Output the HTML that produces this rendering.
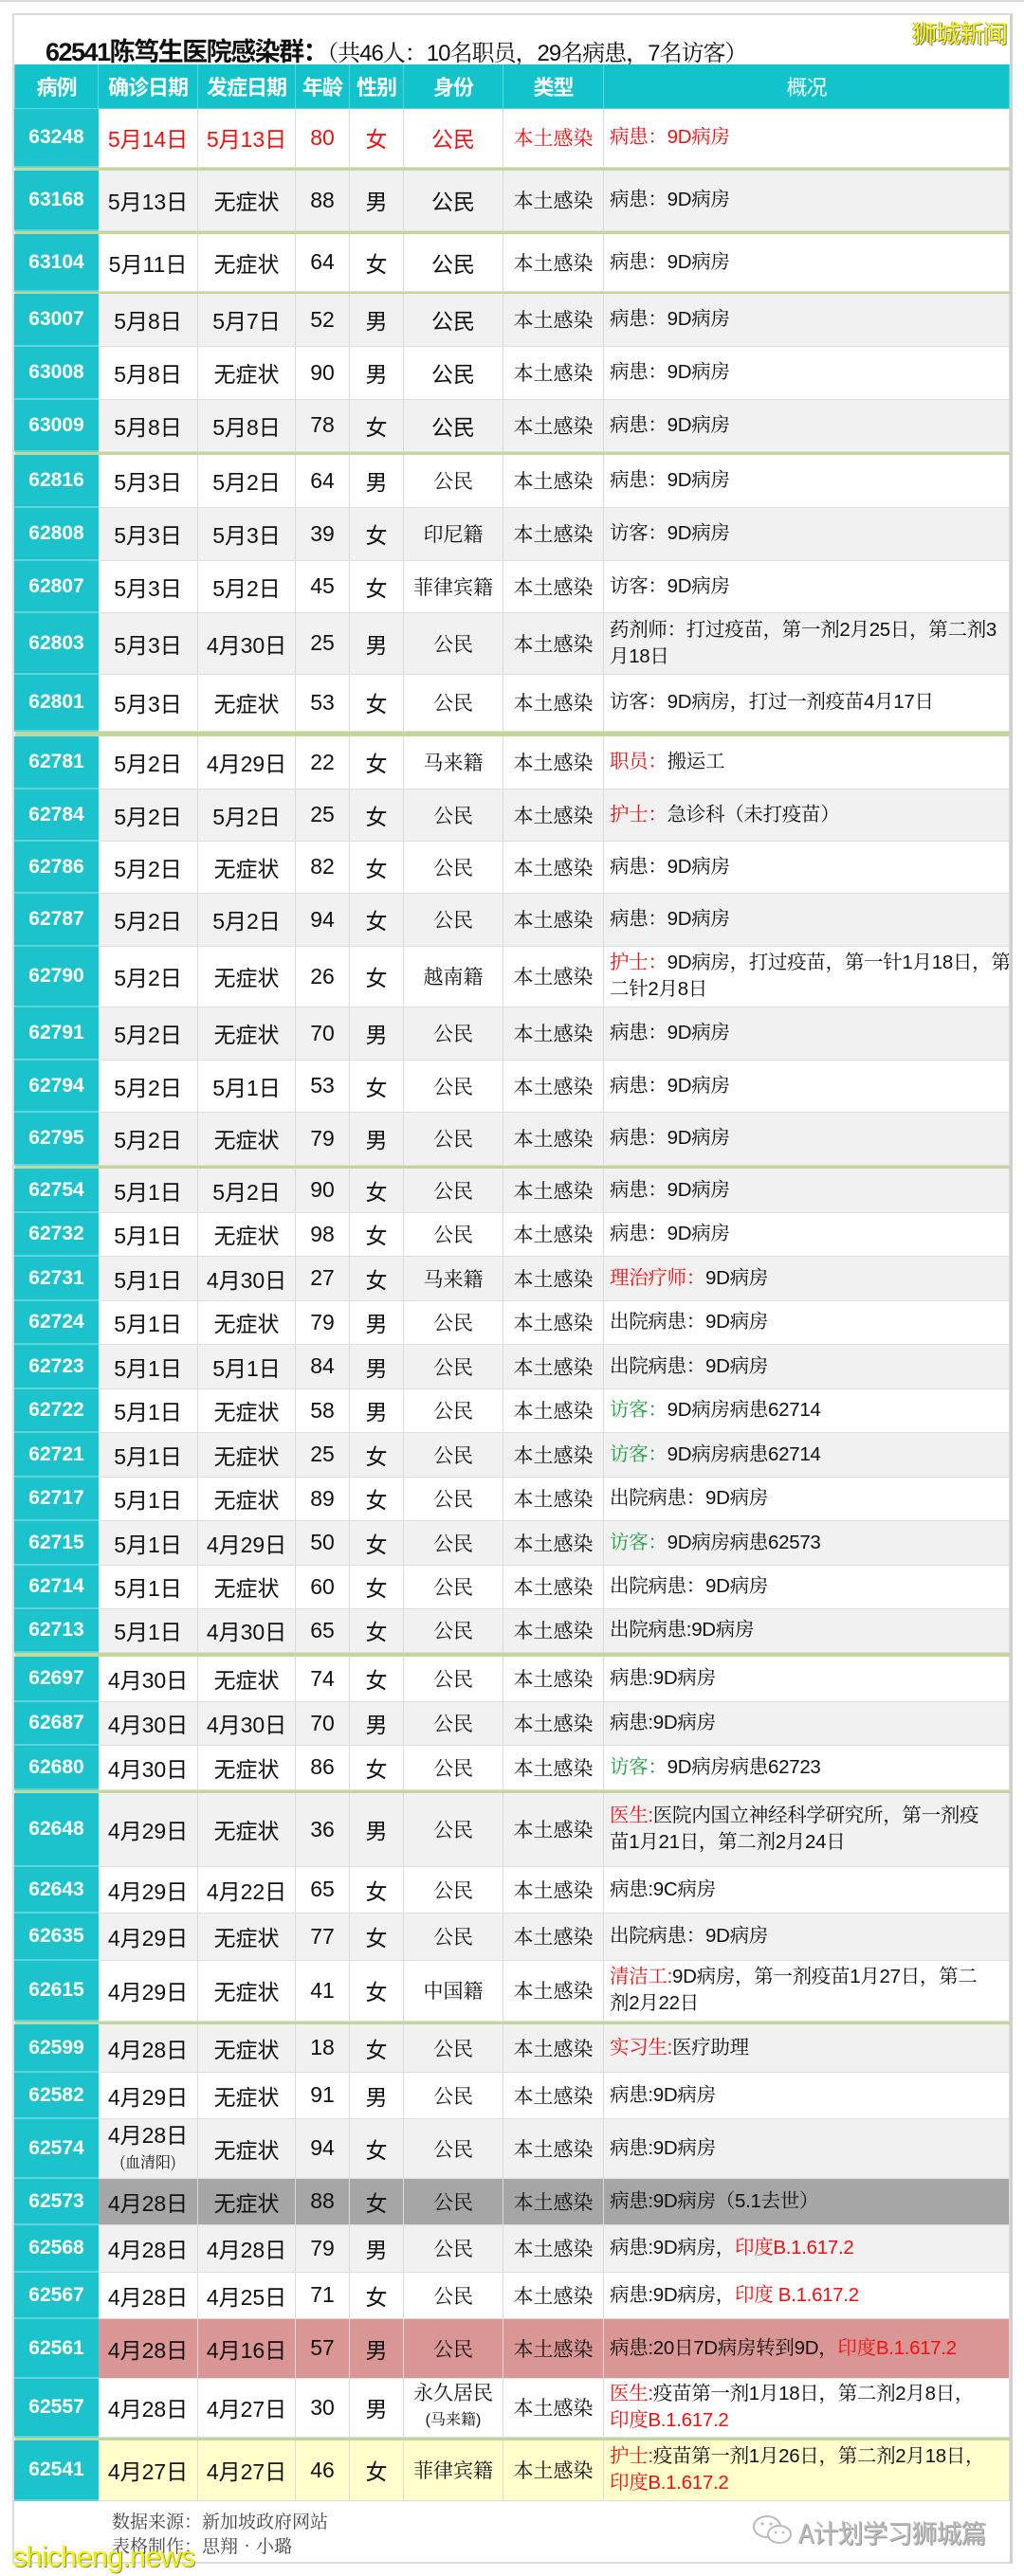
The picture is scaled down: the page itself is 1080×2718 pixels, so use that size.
<!DOCTYPE html>
<html><head><meta charset="utf-8">
<style>
*{margin:0;padding:0;box-sizing:border-box}
body{width:1080px;height:2718px;background:#fff;position:relative;overflow:hidden;font-family:"Liberation Sans","Noto Sans CJK SC",sans-serif}
.topline{position:absolute;left:0;top:0;width:1080px;height:2px;background:#ddd}
.frame{position:absolute;left:13px;top:14px;width:1055px;height:2691px;border:2px solid #dcdcdc;border-right:3px solid #d0d0d0;background:#fff}
.title{position:absolute;left:48px;top:33px;font-size:27px;font-weight:bold;color:#111;white-space:nowrap;letter-spacing:-1.5px}
.title span{font-weight:normal;font-family:"Liberation Sans","Noto Serif CJK SC",serif;font-size:24px;letter-spacing:-1px}
.wm{position:absolute;left:962px;top:16px;font-size:26px;color:#ffff00;text-shadow:1px 1px 0 #777,-1px 0 0 #999;letter-spacing:-1px;font-family:"Noto Sans CJK SC",sans-serif}
table{position:absolute;left:15px;top:68px;border-collapse:collapse;table-layout:fixed;width:1049px}
td{border-left:1px solid #dadada;border-right:1px solid #dadada;border-bottom:1px solid #dedede;text-align:center;vertical-align:middle;padding:0;font-size:23px;color:#111;white-space:nowrap;overflow:hidden}
tr.h td{background:#12c3cc;color:#fff;font-weight:bold;font-size:22px;border-color:#5fd6dc;letter-spacing:-1px}
td.id{background:#1cc3cc;color:#fff;font-weight:bold;font-size:21px;border-color:#1cc3cc;border-bottom:2px solid #5ed3d9}
td.s{font-family:"Liberation Sans","Noto Serif CJK SC",serif;font-size:21px}
td.n{text-align:left;padding-left:6px;font-family:"Liberation Sans","Noto Serif CJK SC",serif;font-size:20.5px;line-height:28px;letter-spacing:-0.3px}
tr.sep td{background:#c4d79b;border:none;padding:0}
tr.g td{background:#f1f1f1}
tr.w td{background:#fff}
tr.dk td{background:#a6a6a6}
tr.pk td{background:#da9694}
tr.yl td{background:#ffffcc}
tr td.id{background:#1cc3cc}
.r{color:#f01010}
.gr{color:#20a040}
tr.red td{color:#f01010}
tr.red td.id{color:#fff}
small{font-size:16px}
.foot{position:absolute;left:118px;font-family:"Noto Serif CJK SC",serif;font-size:19px;color:#444;white-space:nowrap}
.sc{position:absolute;left:13px;top:2680px;font-size:31px;color:#f2f200;text-shadow:1px 1px 0 #888;letter-spacing:-1px}
.wx{position:absolute;left:842px;top:2652px;font-size:27px;color:#bbb;font-family:"Noto Sans CJK SC",sans-serif;letter-spacing:-1px;text-shadow:1px 1px 0 #999}
</style></head><body>
<div class="topline"></div>
<div class="frame"></div>
<div class="title">62541陈笃生医院感染群：<span>（共46人：10名职员，29名病患，7名访客）</span></div>
<div class="wm">狮城新闻</div>
<table>
<colgroup><col style="width:88px"><col style="width:105px"><col style="width:103px"><col style="width:57px"><col style="width:57px"><col style="width:105px"><col style="width:106px"><col style="width:428px"></colgroup>
<tr class="h" style="height:46px"><td>病例</td><td>确诊日期</td><td>发症日期</td><td>年龄</td><td>性别</td><td>身份</td><td>类型</td><td style="font-weight:normal">概况</td></tr>
<tr class="w red" style="height:62px"><td class="id">63248</td><td>5月14日</td><td>5月13日</td><td>80</td><td>女</td><td>公民</td><td class="s">本土感染</td><td class="n">病患：9D病房</td></tr>
<tr class="sep" style="height:4px"><td colspan="8"></td></tr>
<tr class="g" style="height:63px"><td class="id">63168</td><td>5月13日</td><td>无症状</td><td>88</td><td>男</td><td>公民</td><td class="s">本土感染</td><td class="n">病患：9D病房</td></tr>
<tr class="sep" style="height:4px"><td colspan="8"></td></tr>
<tr class="w" style="height:60px"><td class="id">63104</td><td>5月11日</td><td>无症状</td><td>64</td><td>女</td><td>公民</td><td class="s">本土感染</td><td class="n">病患：9D病房</td></tr>
<tr class="sep" style="height:3px"><td colspan="8"></td></tr>
<tr class="g" style="height:55px"><td class="id">63007</td><td>5月8日</td><td>5月7日</td><td>52</td><td>男</td><td>公民</td><td class="s">本土感染</td><td class="n">病患：9D病房</td></tr>
<tr class="w" style="height:56px"><td class="id">63008</td><td>5月8日</td><td>无症状</td><td>90</td><td>男</td><td>公民</td><td class="s">本土感染</td><td class="n">病患：9D病房</td></tr>
<tr class="g" style="height:55px"><td class="id">63009</td><td>5月8日</td><td>5月8日</td><td>78</td><td>女</td><td>公民</td><td class="s">本土感染</td><td class="n">病患：9D病房</td></tr>
<tr class="sep" style="height:4px"><td colspan="8"></td></tr>
<tr class="w" style="height:55px"><td class="id">62816</td><td>5月3日</td><td>5月2日</td><td>64</td><td>男</td><td class="s">公民</td><td class="s">本土感染</td><td class="n">病患：9D病房</td></tr>
<tr class="g" style="height:56px"><td class="id">62808</td><td>5月3日</td><td>5月3日</td><td>39</td><td>女</td><td class="s">印尼籍</td><td class="s">本土感染</td><td class="n">访客：9D病房</td></tr>
<tr class="w" style="height:55px"><td class="id">62807</td><td>5月3日</td><td>5月2日</td><td>45</td><td>女</td><td class="s">菲律宾籍</td><td class="s">本土感染</td><td class="n">访客：9D病房</td></tr>
<tr class="g" style="height:65px"><td class="id">62803</td><td>5月3日</td><td>4月30日</td><td>25</td><td>男</td><td class="s">公民</td><td class="s">本土感染</td><td class="n">药剂师：打过疫苗，第一剂2月25日，第二剂3<br>月18日</td></tr>
<tr class="w" style="height:60px"><td class="id">62801</td><td>5月3日</td><td>无症状</td><td>53</td><td>女</td><td class="s">公民</td><td class="s">本土感染</td><td class="n">访客：9D病房，打过一剂疫苗4月17日</td></tr>
<tr class="sep" style="height:6px"><td colspan="8"></td></tr>
<tr class="w" style="height:55px"><td class="id">62781</td><td>5月2日</td><td>4月29日</td><td>22</td><td>女</td><td class="s">马来籍</td><td class="s">本土感染</td><td class="n"><span class="r">职员：</span>搬运工</td></tr>
<tr class="g" style="height:55px"><td class="id">62784</td><td>5月2日</td><td>5月2日</td><td>25</td><td>女</td><td class="s">公民</td><td class="s">本土感染</td><td class="n"><span class="r">护士：</span>急诊科（未打疫苗）</td></tr>
<tr class="w" style="height:55px"><td class="id">62786</td><td>5月2日</td><td>无症状</td><td>82</td><td>女</td><td class="s">公民</td><td class="s">本土感染</td><td class="n">病患：9D病房</td></tr>
<tr class="g" style="height:56px"><td class="id">62787</td><td>5月2日</td><td>5月2日</td><td>94</td><td>女</td><td class="s">公民</td><td class="s">本土感染</td><td class="n">病患：9D病房</td></tr>
<tr class="w" style="height:64px"><td class="id">62790</td><td>5月2日</td><td>无症状</td><td>26</td><td>女</td><td class="s">越南籍</td><td class="s">本土感染</td><td class="n"><span class="r">护士：</span>9D病房，打过疫苗，第一针1月18日，第<br>二针2月8日</td></tr>
<tr class="g" style="height:56px"><td class="id">62791</td><td>5月2日</td><td>无症状</td><td>70</td><td>男</td><td class="s">公民</td><td class="s">本土感染</td><td class="n">病患：9D病房</td></tr>
<tr class="w" style="height:55px"><td class="id">62794</td><td>5月2日</td><td>5月1日</td><td>53</td><td>女</td><td class="s">公民</td><td class="s">本土感染</td><td class="n">病患：9D病房</td></tr>
<tr class="g" style="height:56px"><td class="id">62795</td><td>5月2日</td><td>无症状</td><td>79</td><td>男</td><td class="s">公民</td><td class="s">本土感染</td><td class="n">病患：9D病房</td></tr>
<tr class="sep" style="height:4px"><td colspan="8"></td></tr>
<tr class="g" style="height:46px"><td class="id">62754</td><td>5月1日</td><td>5月2日</td><td>90</td><td>女</td><td class="s">公民</td><td class="s">本土感染</td><td class="n">病患：9D病房</td></tr>
<tr class="w" style="height:46px"><td class="id">62732</td><td>5月1日</td><td>无症状</td><td>98</td><td>女</td><td class="s">公民</td><td class="s">本土感染</td><td class="n">病患：9D病房</td></tr>
<tr class="g" style="height:47px"><td class="id">62731</td><td>5月1日</td><td>4月30日</td><td>27</td><td>女</td><td class="s">马来籍</td><td class="s">本土感染</td><td class="n"><span class="r">理治疗师：</span>9D病房</td></tr>
<tr class="w" style="height:46px"><td class="id">62724</td><td>5月1日</td><td>无症状</td><td>79</td><td>男</td><td class="s">公民</td><td class="s">本土感染</td><td class="n">出院病患：9D病房</td></tr>
<tr class="g" style="height:47px"><td class="id">62723</td><td>5月1日</td><td>5月1日</td><td>84</td><td>男</td><td class="s">公民</td><td class="s">本土感染</td><td class="n">出院病患：9D病房</td></tr>
<tr class="w" style="height:46px"><td class="id">62722</td><td>5月1日</td><td>无症状</td><td>58</td><td>男</td><td class="s">公民</td><td class="s">本土感染</td><td class="n"><span class="gr">访客：</span>9D病房病患62714</td></tr>
<tr class="g" style="height:47px"><td class="id">62721</td><td>5月1日</td><td>无症状</td><td>25</td><td>女</td><td class="s">公民</td><td class="s">本土感染</td><td class="n"><span class="gr">访客：</span>9D病房病患62714</td></tr>
<tr class="w" style="height:46px"><td class="id">62717</td><td>5月1日</td><td>无症状</td><td>89</td><td>女</td><td class="s">公民</td><td class="s">本土感染</td><td class="n">出院病患：9D病房</td></tr>
<tr class="g" style="height:47px"><td class="id">62715</td><td>5月1日</td><td>4月29日</td><td>50</td><td>女</td><td class="s">公民</td><td class="s">本土感染</td><td class="n"><span class="gr">访客：</span>9D病房病患62573</td></tr>
<tr class="w" style="height:46px"><td class="id">62714</td><td>5月1日</td><td>无症状</td><td>60</td><td>女</td><td class="s">公民</td><td class="s">本土感染</td><td class="n">出院病患：9D病房</td></tr>
<tr class="g" style="height:46px"><td class="id">62713</td><td>5月1日</td><td>4月30日</td><td>65</td><td>女</td><td class="s">公民</td><td class="s">本土感染</td><td class="n">出院病患:9D病房</td></tr>
<tr class="sep" style="height:5px"><td colspan="8"></td></tr>
<tr class="w" style="height:47px"><td class="id">62697</td><td>4月30日</td><td>无症状</td><td>74</td><td>女</td><td class="s">公民</td><td class="s">本土感染</td><td class="n">病患:9D病房</td></tr>
<tr class="g" style="height:46px"><td class="id">62687</td><td>4月30日</td><td>4月30日</td><td>70</td><td>男</td><td class="s">公民</td><td class="s">本土感染</td><td class="n">病患:9D病房</td></tr>
<tr class="w" style="height:47px"><td class="id">62680</td><td>4月30日</td><td>无症状</td><td>86</td><td>女</td><td class="s">公民</td><td class="s">本土感染</td><td class="n"><span class="gr">访客：</span>9D病房病患62723</td></tr>
<tr class="sep" style="height:4px"><td colspan="8"></td></tr>
<tr class="g" style="height:77px"><td class="id">62648</td><td>4月29日</td><td>无症状</td><td>36</td><td>男</td><td class="s">公民</td><td class="s">本土感染</td><td class="n"><span class="r">医生:</span>医院内国立神经科学研究所，第一剂疫<br>苗1月21日，第二剂2月24日</td></tr>
<tr class="w" style="height:49px"><td class="id">62643</td><td>4月29日</td><td>4月22日</td><td>65</td><td>女</td><td class="s">公民</td><td class="s">本土感染</td><td class="n">病患:9C病房</td></tr>
<tr class="g" style="height:50px"><td class="id">62635</td><td>4月29日</td><td>无症状</td><td>77</td><td>女</td><td class="s">公民</td><td class="s">本土感染</td><td class="n">出院病患：9D病房</td></tr>
<tr class="w" style="height:64px"><td class="id">62615</td><td>4月29日</td><td>无症状</td><td>41</td><td>女</td><td class="s">中国籍</td><td class="s">本土感染</td><td class="n"><span class="r">清洁工:</span>9D病房，第一剂疫苗1月27日，第二<br>剂2月22日</td></tr>
<tr class="sep" style="height:4px"><td colspan="8"></td></tr>
<tr class="g" style="height:50px"><td class="id">62599</td><td>4月28日</td><td>无症状</td><td>18</td><td>女</td><td class="s">公民</td><td class="s">本土感染</td><td class="n"><span class="r">实习生:</span>医疗助理</td></tr>
<tr class="w" style="height:49px"><td class="id">62582</td><td>4月29日</td><td>无症状</td><td>91</td><td>男</td><td class="s">公民</td><td class="s">本土感染</td><td class="n">病患:9D病房</td></tr>
<tr class="g" style="height:63px"><td class="id">62574</td><td style="line-height:26px">4月28日<br><small class="s" style="font-family:'Noto Serif CJK SC',serif">(血清阳)</small></td><td>无症状</td><td>94</td><td>女</td><td class="s">公民</td><td class="s">本土感染</td><td class="n">病患:9D病房</td></tr>
<tr class="dk" style="height:49px"><td class="id">62573</td><td>4月28日</td><td>无症状</td><td>88</td><td>女</td><td class="s">公民</td><td class="s">本土感染</td><td class="n">病患:9D病房（5.1去世）</td></tr>
<tr class="g" style="height:50px"><td class="id">62568</td><td>4月28日</td><td>4月28日</td><td>79</td><td>男</td><td class="s">公民</td><td class="s">本土感染</td><td class="n">病患:9D病房，<span class="r">印度B.1.617.2</span></td></tr>
<tr class="w" style="height:49px"><td class="id">62567</td><td>4月28日</td><td>4月25日</td><td>71</td><td>女</td><td class="s">公民</td><td class="s">本土感染</td><td class="n">病患:9D病房，<span class="r">印度 B.1.617.2</span></td></tr>
<tr class="pk" style="height:63px"><td class="id">62561</td><td>4月28日</td><td>4月16日</td><td>57</td><td>男</td><td class="s">公民</td><td class="s">本土感染</td><td class="n">病患:20日7D病房转到9D，<span class="r">印度B.1.617.2</span></td></tr>
<tr class="w" style="height:62px"><td class="id">62557</td><td>4月28日</td><td>4月27日</td><td>30</td><td>男</td><td class="s" style="line-height:26px">永久居民<br><small>(马来籍)</small></td><td class="s">本土感染</td><td class="n"><span class="r">医生:</span>疫苗第一剂1月18日，第二剂2月8日，<br><span class="r">印度B.1.617.2</span></td></tr>
<tr class="sep" style="height:4px"><td colspan="8"></td></tr>
<tr class="yl" style="height:63px"><td class="id">62541</td><td>4月27日</td><td>4月27日</td><td>46</td><td>女</td><td class="s">菲律宾籍</td><td class="s">本土感染</td><td class="n"><span class="r">护士:</span>疫苗第一剂1月26日，第二剂2月18日，<br><span class="r">印度B.1.617.2</span></td></tr>
</table>
<div class="foot" style="top:2646px">数据来源：新加坡政府网站</div>
<div class="foot" style="top:2672px">表格制作：思翔•小璐</div>
<svg style="position:absolute;left:792px;top:2652px" width="46" height="36" viewBox="0 0 46 36"><ellipse cx="17" cy="14" rx="14" ry="11" fill="none" stroke="#bbb" stroke-width="2"/><ellipse cx="30" cy="22" rx="12" ry="9" fill="#fff" stroke="#bbb" stroke-width="2"/><circle cx="12" cy="11" r="1.6" fill="#bbb"/><circle cx="21" cy="11" r="1.6" fill="#bbb"/><circle cx="26" cy="20" r="1.4" fill="#bbb"/><circle cx="34" cy="20" r="1.4" fill="#bbb"/></svg>
<div class="wx">A计划学习狮城篇</div>
<div class="sc">shicheng.news</div>
</body></html>
